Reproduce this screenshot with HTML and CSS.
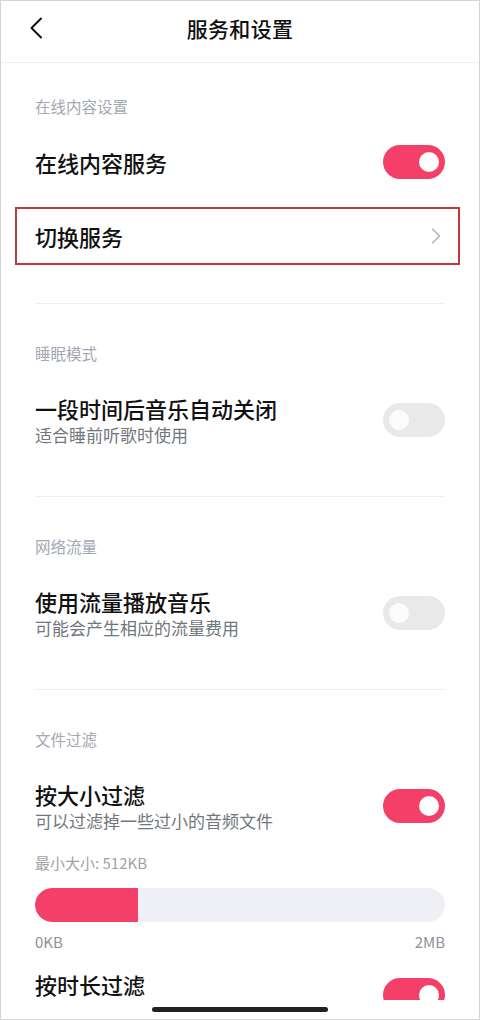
FILE: index.html
```html
<!DOCTYPE html>
<html lang="zh-CN">
<head>
<meta charset="utf-8">
<title>服务和设置</title>
<link rel="stylesheet" href="styles.css">
</head>
<body>
<div class="screen">
  <header class="topbar">
    <div class="back">
      <svg width="14" height="22" viewBox="0 0 14 22"><path d="M12 1.5 L2.5 11 L12 20.5" fill="none" stroke="#111" stroke-width="2" stroke-linecap="round" stroke-linejoin="round"/></svg>
    </div>
    <h1 class="title">服务和设置</h1>
    <div></div>
  </header>
  <main class="content">
    <section class="section first">
      <div class="label">在线内容设置</div>
      <div class="row single">
        <div class="item-title">在线内容服务</div>
        <span class="toggle on"></span>
      </div>
      <div class="row boxed">
        <div class="item-title">切换服务</div>
        <svg class="chev" width="10" height="16" viewBox="0 0 10 16"><path d="M1.5 1 L8.5 8 L1.5 15" fill="none" stroke="#b0b0b0" stroke-width="1.4" stroke-linecap="round" stroke-linejoin="round"/></svg>
      </div>
    </section>
    <section class="section">
      <div class="label">睡眠模式</div>
      <div class="row double">
        <div>
          <div class="item-title">一段时间后音乐自动关闭</div>
          <div class="item-sub">适合睡前听歌时使用</div>
        </div>
        <span class="toggle off"></span>
      </div>
    </section>
    <section class="section">
      <div class="label">网络流量</div>
      <div class="row double">
        <div>
          <div class="item-title">使用流量播放音乐</div>
          <div class="item-sub">可能会产生相应的流量费用</div>
        </div>
        <span class="toggle off"></span>
      </div>
    </section>
    <section class="section last">
      <div class="label">文件过滤</div>
      <div class="row double">
        <div>
          <div class="item-title">按大小过滤</div>
          <div class="item-sub">可以过滤掉一些过小的音频文件</div>
        </div>
        <span class="toggle on"></span>
      </div>
      <div class="minsize">最小大小: 512KB</div>
      <div class="slider"><div class="fill" style="width:25%"></div></div>
      <div class="scale"><span>0KB</span><span>2MB</span></div>
      <div class="row top">
        <div class="item-title">按时长过滤</div>
        <span class="toggle on"></span>
      </div>
    </section>
  </main>
  <footer class="homebar"><span class="indicator"></span></footer>
</div>
</body>
</html>
```
FILE: styles.css
```css
* { box-sizing: border-box; }
html, body { margin: 0; padding: 0; background: #fff; }
body { font-family: "Noto Sans CJK SC", "Noto Sans", sans-serif; color: #111; }

.screen {
  width: 480px;
  height: 1020px;
  border: 1px solid #d4d4d4;
  display: flex;
  flex-direction: column;
  overflow: hidden;
  background: #fff;
}

.topbar {
  height: 62px;
  flex: none;
  border-bottom: 1px solid #efefef;
  display: grid;
  grid-template-columns: 1fr auto 1fr;
  align-items: center;
  padding-bottom: 7px;
}
.back { padding-left: 28px; display: flex; align-items: center; }
.title {
  margin: 0;
  font-size: 21px;
  font-weight: 500;
  line-height: 30px;
  letter-spacing: 0.3px;
}

.content {
  flex: 1;
  min-height: 0;
  overflow: hidden;
  padding: 31px 34px 0;
}

.section { border-bottom: 1px solid #eeeeee; padding-bottom: 49px; padding-top: 37px; }
.section.first { padding-top: 0; padding-bottom: 38px; }
.section.last { border-bottom: none; padding-bottom: 0; }

.label {
  font-size: 15.5px;
  line-height: 24px;
  color: #a3a8b4;
}

.row {
  display: flex;
  align-items: center;
  justify-content: space-between;
}
.row.single { height: 58px; margin-top: 15px; }
.row.double { margin-top: 28px; }
.row.top { margin-top: 20px; align-items: flex-start; }
.row.top .item-title { line-height: 24px; }
.row.top .toggle { margin-top: 6px; }
.row.boxed {
  height: 58px;
  margin: 16px -15px 0 -20px;
  padding: 0 15px 0 18px;
  border: 2px solid #c9353d;
}

.item-title {
  font-size: 22px;
  font-weight: 500;
  line-height: 30px;
}
.item-sub {
  font-size: 17px;
  line-height: 24px;
  color: #72767e;
}

.chev { margin-right: 2px; }

.toggle {
  width: 62px;
  height: 34px;
  border-radius: 17px;
  position: relative;
  flex: none;
}
.toggle::after {
  content: "";
  position: absolute;
  top: 7px;
  width: 20px;
  height: 20px;
  border-radius: 50%;
  background: #fff;
}
.toggle.on { background: #f43f69; }
.toggle.on::after { right: 6px; }
.toggle.off { background: #e9e9e9; }
.toggle.off::after { left: 6px; background: #fbfbfb; }

.minsize {
  margin-top: 19px;
  font-size: 15px;
  line-height: 22px;
  color: #9ea2aa;
}
.slider {
  margin-top: 14px;
  height: 34px;
  border-radius: 17px;
  background: #eef0f5;
  overflow: hidden;
}
.slider .fill {
  height: 100%;
  background: #f43f69;
  border-radius: 17px 0 0 17px;
}
.scale {
  margin-top: 10px;
  display: flex;
  justify-content: space-between;
  font-size: 15px;
  line-height: 20px;
  color: #8e9198;
}

.homebar {
  height: 19px;
  flex: none;
  display: flex;
  justify-content: center;
  align-items: flex-start;
  padding-top: 7px;
}
.indicator {
  width: 176px;
  height: 5px;
  border-radius: 3px;
  background: #222;
}
```
